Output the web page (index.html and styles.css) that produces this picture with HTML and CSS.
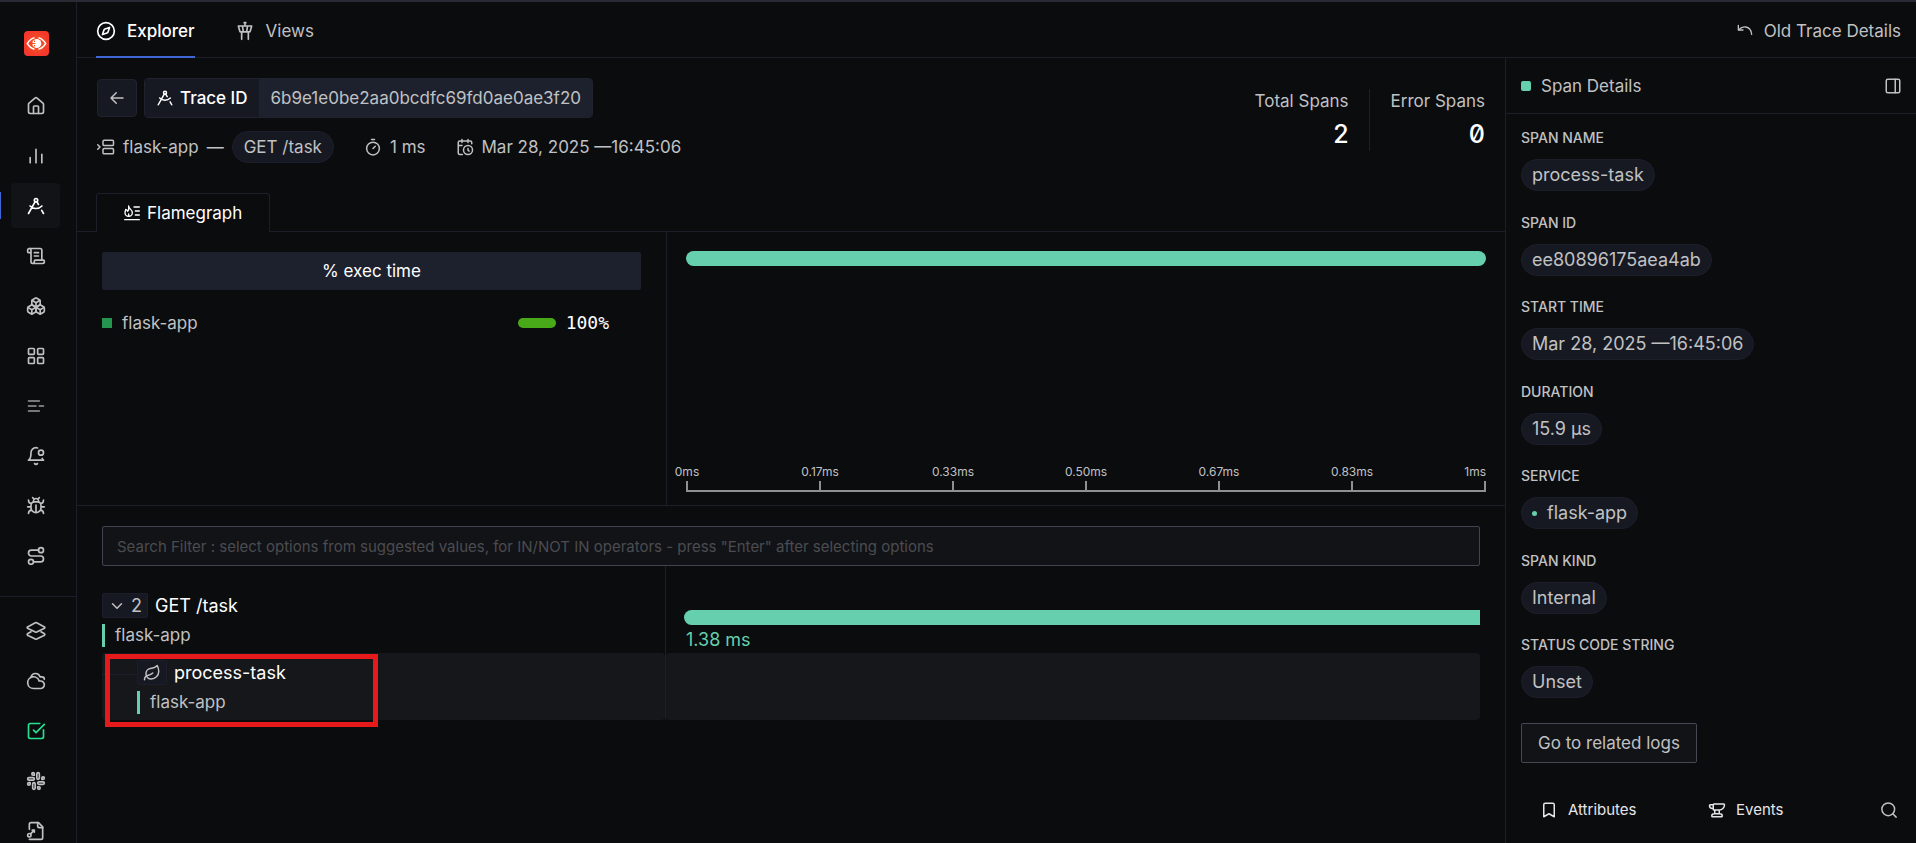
FILE: index.html
```html
<!DOCTYPE html>
<html lang="en">
<head>
<meta charset="utf-8">
<title>Trace Details</title>
<link rel="stylesheet" href="styles.css">
</head>
<body>
<div class="app">
  <nav class="sidebar" aria-label="Primary">
    <a class="logo" href="#" aria-label="Home">
      <svg viewBox="0 0 25 25" width="25" height="25"><defs><radialGradient id="lg"><stop offset="0" stop-color="#f25a1c"/><stop offset="1" stop-color="#f5382c"/></radialGradient></defs><rect width="25" height="25" rx="4" fill="url(#lg)"/><path d="M10.500 6.800Q6.500 7.500 3.300 12.500Q6.500 17.500 10.500 18.200M14.500 6.800Q18.500 7.500 21.700 12.500Q18.500 17.500 14.500 18.200" fill="none" stroke="#fff" stroke-width="1.400"/><circle cx="12.800" cy="12.500" r="4.500" fill="#fff"/><path d="M10.500 9.500v1.500M10.500 14v1.500M8 12.500h3.500" stroke="#f3521f" stroke-width="1"/></svg>
    </a>
    <ul class="nav-list">
      <li><a class="nav-item" href="#" aria-label="Home"><svg class="ico" viewBox="0 0 24 24"><path d="M15 21v-8a1 1 0 0 0-1-1h-4a1 1 0 0 0-1 1v8"/><path d="M3 10a2 2 0 0 1 .709-1.528l7-5.999a2 2 0 0 1 2.582 0l7 5.999A2 2 0 0 1 21 10v9a2 2 0 0 1-2 2H5a2 2 0 0 1-2-2z"/></svg></a></li>
      <li><a class="nav-item" href="#" aria-label="Services"><svg class="ico" viewBox="0 0 24 24"><path d="M12 20V4M19 20V10M5 20v-6"/></svg></a></li>
      <li><a class="nav-item active" href="#" aria-label="Traces"><svg class="ico" viewBox="0 0 24 24"><use href="#drafting"/></svg></a></li>
      <li><a class="nav-item" href="#" aria-label="Logs"><svg class="ico" viewBox="0 0 24 24"><path d="M15 12h-5M15 8h-5M19 17V5a2 2 0 0 0-2-2H4"/><path d="M8 21h12a2 2 0 0 0 2-2v-1a1 1 0 0 0-1-1H11a1 1 0 0 0-1 1v1a2 2 0 1 1-4 0V5a2 2 0 1 0-4 0v2a1 1 0 0 0 1 1h3"/></svg></a></li>
      <li><a class="nav-item" href="#" aria-label="Infrastructure"><svg class="ico" viewBox="0 0 24 24"><path d="M2.970 12.920A2 2 0 0 0 2 14.630v3.240a2 2 0 0 0 .970 1.710l3 1.800a2 2 0 0 0 2.060 0L12 19v-5.500l-5-3-4.030 2.420Z"/><path d="m7 16.500-4.740-2.850M7 16.500l5-3M7 16.500v5.170"/><path d="M12 13.500V19l3.970 2.380a2 2 0 0 0 2.060 0l3-1.800a2 2 0 0 0 .970-1.710v-3.240a2 2 0 0 0-.970-1.710L17 10.500l-5 3Z"/><path d="m17 16.500-5-3M17 16.500l4.740-2.850M17 16.500v5.170"/><path d="M7.970 4.420A2 2 0 0 0 7 6.130v4.370l5 3 5-3V6.130a2 2 0 0 0-.970-1.710l-3-1.800a2 2 0 0 0-2.060 0l-3 1.800Z"/><path d="M12 8 7.260 5.150M12 8l4.740-2.850M12 13.500V8"/></svg></a></li>
      <li><a class="nav-item" href="#" aria-label="Dashboards"><svg class="ico" viewBox="0 0 24 24"><rect x="3" y="3" width="7" height="7" rx="1"/><rect x="14" y="3" width="7" height="7" rx="1"/><rect x="14" y="14" width="7" height="7" rx="1"/><rect x="3" y="14" width="7" height="7" rx="1"/></svg></a></li>
      <li><a class="nav-item" href="#" aria-label="Messaging queues"><svg class="ico dim" viewBox="0 0 24 24"><path d="M3 6h13M3 12h9M16 12h5M3 18h13"/></svg></a></li>
      <li><a class="nav-item" href="#" aria-label="Alerts"><svg class="ico" viewBox="0 0 24 24"><path d="M19.400 14.900C20.200 16.400 21 17 21 17H3s3-2 3-9c0-3.300 2.700-6 6-6 .700 0 1.300.100 1.900.300"/><path d="M10.300 21a1.940 1.940 0 0 0 3.400 0"/><circle cx="18" cy="8" r="3"/></svg></a></li>
      <li><a class="nav-item" href="#" aria-label="Exceptions"><svg class="ico" viewBox="0 0 24 24"><path d="m8 2 1.880 1.880M14.120 3.880 16 2M9 7.130v-1a3.003 3.003 0 1 1 6 0v1"/><path d="M12 20c-3.300 0-6-2.700-6-6v-3a4 4 0 0 1 4-4h4a4 4 0 0 1 4 4v3c0 3.300-2.700 6-6 6M12 20v-9M6.530 9C4.600 8.800 3 7.100 3 5M6 13H2M3 21c0-2.100 1.700-3.900 3.800-4M20.970 5c0 2.100-1.600 3.800-3.500 4M22 13h-4M17.200 17c2.100.100 3.800 1.900 3.800 4"/></svg></a></li>
      <li><a class="nav-item" href="#" aria-label="Service map"><svg class="ico" viewBox="0 0 24 24"><circle cx="6" cy="19" r="3"/><path d="M9 19h8.500a3.500 3.500 0 0 0 0-7h-11a3.500 3.500 0 0 1 0-7H15"/><circle cx="18" cy="5" r="3"/></svg></a></li>
    </ul>
    <ul class="nav-list nav-secondary">
      <li><a class="nav-item" href="#" aria-label="Workspace"><svg class="ico" viewBox="0 0 24 24"><path d="M12.830 2.180a2 2 0 0 0-1.660 0L1.800 7.080a1 1 0 0 0 0 1.630l9.380 4.610a2 2 0 0 0 1.660 0l9.380-4.600a1 1 0 0 0 0-1.630ZM6 13 1.800 15.380a1 1 0 0 0 0 1.630l9.380 4.710a2 2 0 0 0 1.660 0l9.380-4.700a1 1 0 0 0 0-1.630L18 13"/></svg></a></li>
      <li><a class="nav-item" href="#" aria-label="Cloud"><svg class="ico" viewBox="0 0 24 24"><path d="M17.500 21H9a7 7 0 1 1 6.710-9h1.790a4.500 4.500 0 1 1 0 9Z"/><path d="M22 10a3 3 0 0 0-3-3h-2.207a5.502 5.502 0 0 0-10.702.500"/></svg></a></li>
      <li><a class="nav-item ok" href="#" aria-label="Status"><svg class="ico" viewBox="0 0 24 24"><path d="M21 10.500V19a2 2 0 0 1-2 2H5a2 2 0 0 1-2-2V5a2 2 0 0 1 2-2h11.500"/><path d="m9 11 3 3L22 4"/></svg></a></li>
      <li><a class="nav-item" href="#" aria-label="Slack"><svg class="ico" viewBox="0 0 24 24"><rect x="13" y="2" width="3" height="8" rx="1.500"/><path d="M19 8.500V10h1.500A1.500 1.500 0 1 0 19 8.500"/><rect x="8" y="14" width="3" height="8" rx="1.500"/><path d="M5 15.500V14H3.500A1.500 1.500 0 1 0 5 15.500"/><rect x="14" y="13" width="8" height="3" rx="1.500"/><path d="M15.500 19H14v1.500a1.500 1.500 0 1 0 1.500-1.500"/><rect x="2" y="8" width="8" height="3" rx="1.500"/><path d="M8.500 5H10V3.500A1.500 1.500 0 1 0 8.500 5"/></svg></a></li>
      <li><a class="nav-item" href="#" aria-label="Shortcuts"><svg class="ico" viewBox="0 0 24 24"><path d="M14 2v4a2 2 0 0 0 2 2h4"/><path d="M4 10V4a2 2 0 0 1 2-2h9l5 5v13a2 2 0 0 1-2 2H4"/><circle cx="4" cy="17" r="2"/><path d="m5.500 15.500 4.500-4.500M7.500 11H10v2.500"/></svg></a></li>
    </ul>
  </nav>

  <div class="page">
    <header class="topbar">
      <div class="top-tabs">
        <a class="top-tab active" href="#"><svg class="ico" viewBox="0 0 24 24"><circle cx="12" cy="12" r="10"/><path d="m16.240 7.760-1.804 5.411a2 2 0 0 1-1.265 1.265L7.760 16.240l1.804-5.411a2 2 0 0 1 1.265-1.265z"/></svg><span>Explorer</span></a>
        <a class="top-tab" href="#"><svg class="ico" viewBox="0 0 24 24"><path d="M18.200 12.270 20 6H4l1.800 6.270a1 1 0 0 0 .950.730h10.500a1 1 0 0 0 .960-.730ZM8 13v9M16 22v-9M9 6l1 7M15 6l-1 7M12 6V2M13 2h-2"/></svg><span>Views</span></a>
      </div>
      <a class="old-link" href="#"><svg class="ico s16" viewBox="0 0 24 24"><path d="M2 3.500v7h7"/><path d="M2.500 10C6 6.500 9.500 5.500 13 6c5 .800 8.500 5 9 11"/></svg><span>Old Trace Details</span></a>
    </header>

    <div class="body">
      <main class="main">
        <section class="trace-head">
          <div class="trace-info">
            <div class="id-row">
              <button class="back" type="button" aria-label="Back"><svg class="ico s18" viewBox="0 0 24 24"><path d="m11 19-7-7 7-7M20 12H4"/></svg></button>
              <div class="trace-id">
                <div class="id-label"><svg class="ico s18" viewBox="0 0 24 24"><use href="#drafting"/></svg><span>Trace ID</span></div>
                <div class="id-value">6b9e1e0be2aa0bcdfc69fd0ae0ae3f20</div>
              </div>
            </div>
            <div class="meta-row">
              <div class="meta svc"><svg class="ico s18" viewBox="0 0 24 24"><rect x="8" y="3" width="14" height="7" rx="1.500"/><rect x="8" y="14" width="14" height="7" rx="1.500"/><path d="m1 9 3 3-3 3"/></svg><span>flask-app</span><span>—</span><span class="chip">GET /task</span></div>
              <div class="meta"><svg class="ico s18" viewBox="0 0 24 24"><path d="M10 2h4M12 14l3-3"/><circle cx="12" cy="14" r="8.500"/></svg><span>1 ms</span></div>
              <div class="meta"><svg class="ico s18" viewBox="0 0 24 24"><path d="M21 7.500V6a2 2 0 0 0-2-2H5a2 2 0 0 0-2 2v14a2 2 0 0 0 2 2h3.500M16 2v4M8 2v4M3 10h5M17.500 17.500 16 16.300V14"/><circle cx="16" cy="16" r="6"/></svg><span>Mar 28, 2025 —16:45:06</span></div>
            </div>
          </div>
          <dl class="stats">
            <div class="stat"><dt>Total Spans</dt><dd>2</dd></div>
            <div class="stat"><dt>Error Spans</dt><dd>0</dd></div>
          </dl>
        </section>

        <div class="tabs">
          <button class="tab" type="button"><svg class="ico s16 fine" viewBox="0 0 24 24"><path d="M15 3h8M17 9h6M17 15h6M1 22h22M7 1.500c0 4.500 5.500 5 5.500 10a5.500 5.500 0 0 1-11 0c0-2 1-3 1-5C4 7 5 8 5.500 9.500 7 8 7.500 5 7 1.500ZM7 16.500v-3"/></svg><span>Flamegraph</span></button>
        </div>

        <section class="flame">
          <div class="exec">
            <div class="exec-title">% exec time</div>
            <div class="exec-row">
              <span class="sq"></span><span class="exec-name">flask-app</span>
              <span class="exec-bar"></span><span class="exec-pct">100%</span>
            </div>
          </div>
          <div class="flame-chart">
            <div class="bar"></div>
            <div class="axis">
              <span>0ms</span><span>0.17ms</span><span>0.33ms</span><span>0.50ms</span><span>0.67ms</span><span>0.83ms</span><span>1ms</span>
            </div>
          </div>
        </section>

        <section class="spans">
          <input class="search" type="text" aria-label="Search filter" placeholder='Search Filter : select options from suggested values, for IN/NOT IN operators - press "Enter" after selecting options'>
          <div class="waterfall">
            <div class="span-row">
              <div class="span-left">
                <div class="span-top"><button class="count" type="button"><svg class="ico s18" viewBox="0 0 24 24"><path d="m6 9 6 6 6-6"/></svg><span>2</span></button><span class="span-name">GET /task</span></div>
                <div class="span-svc">flask-app</div>
              </div>
              <div class="span-right"><div class="bar open"></div><div class="dur">1.38 ms</div></div>
            </div>
            <div class="span-row selected">
              <div class="span-left child">
                <div class="span-top"><span class="leaf"><svg class="ico s18" viewBox="0 0 24 24"><path d="M11 20A7 7 0 0 1 9.800 6.100C15.500 5 17 4.480 19 2c1 2 2 4.180 2 8 0 5.500-4.780 10-10 10Z"/><path d="M2 21c0-3 1.850-5.360 5.080-6C9.500 14.520 12 13 13 12"/></svg></span><span class="span-name">process-task</span></div>
                <div class="span-svc">flask-app</div>
              </div>
              <div class="span-right"></div>
              <div class="highlight"></div>
            </div>
          </div>
        </section>
      </main>

      <aside class="details">
        <div class="details-head"><span class="dot-sq"></span><h2>Span Details</h2><button class="plain" type="button" aria-label="Dock panel"><svg class="ico s18" viewBox="0 0 24 24"><rect x="3" y="3" width="18" height="18" rx="2"/><path d="M15 3v18"/></svg></button></div>
        <dl class="attrs">
          <div><dt>SPAN NAME</dt><dd class="chip">process-task</dd></div>
          <div><dt>SPAN ID</dt><dd class="chip">ee80896175aea4ab</dd></div>
          <div><dt>START TIME</dt><dd class="chip">Mar 28, 2025 —16:45:06</dd></div>
          <div><dt>DURATION</dt><dd class="chip">15.9 µs</dd></div>
          <div><dt>SERVICE</dt><dd class="chip"><span class="dot"></span>flask-app</dd></div>
          <div><dt>SPAN KIND</dt><dd class="chip">Internal</dd></div>
          <div><dt>STATUS CODE STRING</dt><dd class="chip">Unset</dd></div>
        </dl>
        <button class="related" type="button">Go to related logs</button>
        <div class="detail-tabs">
          <button class="dtab" type="button"><svg class="ico s18" viewBox="0 0 24 24"><path d="m19 21-7-4-7 4V5a2 2 0 0 1 2-2h10a2 2 0 0 1 2 2z"/></svg><span>Attributes</span></button>
          <button class="dtab" type="button"><svg class="ico s18" viewBox="0 0 24 24"><path d="M7 10H6a4 4 0 0 1-4-4 1 1 0 0 1 1-1h4M7 5a1 1 0 0 1 1-1h13a1 1 0 0 1 1 1 7 7 0 0 1-7 7H8a1 1 0 0 1-1-1zM9 12v5M15 12v5M5 20a3 3 0 0 1 3-3h8a3 3 0 0 1 3 3 1 1 0 0 1-1 1H6a1 1 0 0 1-1-1"/></svg><span>Events</span></button>
          <button class="plain" type="button" aria-label="Search attributes"><svg class="ico s18" viewBox="0 0 24 24"><circle cx="11" cy="11" r="8.500"/><path d="m21.500 21.500-4.400-4.400"/></svg></button>
        </div>
      </aside>
    </div>
  </div>
</div>
<svg class="defs" aria-hidden="true"><defs><g id="drafting"><path d="m12.990 6.740 1.930 3.440M19.136 12a10 10 0 0 1-14.271 0M21 21l-2.160-3.840M3 21l8.020-14.260"/><circle cx="12" cy="5" r="2"/></g></defs></svg>
</body>
</html>
```

FILE: styles.css
```css
* { box-sizing: border-box; }
:root {
  --bg: #0b0c0e;
  --line: #1d1e2b;
  --panel: #171922;
  --slate: #1d212d;
  --text: #c0c1c3;
  --mint: #66cfad;
}
body {
  margin: 0;
  background: var(--bg);
  color: var(--text);
  font: 17px/24px Inter, "Liberation Sans", sans-serif;
}
button, input { font: inherit; color: inherit; }
button { cursor: pointer; }
a { color: inherit; text-decoration: none; }
ul, dl, dd, h2 { margin: 0; padding: 0; list-style: none; }
.defs { position: absolute; width: 0; height: 0; }
.ico {
  width: 20px; height: 20px; flex: none;
  fill: none; stroke: currentColor; stroke-width: 2;
  stroke-linecap: round; stroke-linejoin: round;
}
.s18 { width: 18px; height: 18px; }
.s16 { width: 16px; height: 16px; }
.dim { opacity: .8; }

.app { display: flex; height: 100vh; border-top: 2px solid #2a2a35; overflow: hidden; }

.sidebar { width: 77px; flex: none; border-right: 1px solid var(--line); overflow: hidden; }
.logo { display: block; height: 25px; margin: 29px 0 27px 24px; }
.nav-list { display: grid; gap: 5px; }
.nav-secondary { margin-top: 18px; padding-top: 11px; border-top: 1px solid var(--line); }
.nav-item { display: grid; place-items: center; width: 49px; height: 45px; margin-left: 11px; border-radius: 4px; }
.nav-list li:has(.active) { background: linear-gradient(#3f66d8, #3f66d8) left center / 1px 27px no-repeat; }
.nav-item.active { background: #121317; color: #fff; }
.nav-item.ok { color: #25e192; }

.page { flex: 1; min-width: 0; display: flex; flex-direction: column; }
.topbar { display: flex; justify-content: space-between; height: 56px; flex: none; padding: 0 15px 0 19px; border-bottom: 1px solid var(--line); }
.top-tabs { display: flex; gap: 40px; }
.top-tab { display: flex; align-items: center; gap: 11px; height: 56px; padding-top: 4px; border-bottom: 2px solid transparent; }
.top-tab.active { color: #fff; font-weight: 500; border-color: #4166d6; }
.old-link { display: flex; align-items: center; gap: 11px; padding-top: 3px; }

.body { flex: 1; min-height: 0; display: flex; }
.main { flex: 1; min-width: 0; border-right: 1px solid var(--line); }

.trace-head { display: flex; justify-content: space-between; padding: 20px 20px 0 20px; }
.id-row { display: flex; align-items: center; gap: 7px; }
.back { display: grid; place-items: center; width: 40px; height: 38px; padding: 0; background: var(--panel); border: 1px solid #20232f; border-radius: 4px; }
.trace-id { display: flex; height: 40px; border: 1px solid #20232f; border-radius: 4px; overflow: hidden; }
.id-label, .id-value { display: flex; align-items: center; gap: 6px; padding: 0 11px; }
.id-label { background: var(--panel); color: #fff; font-weight: 500; border-right: 1px solid #20232f; }
.id-value { background: var(--slate); }
.meta-row { display: flex; gap: 30px; margin-top: 13px; }
.meta { display: flex; align-items: center; gap: 8px; height: 32px; }
.chip {
  display: inline-flex; align-items: center; gap: 10px;
  height: 32px; padding: 0 11px;
  background: var(--panel); border: 1px solid var(--line); border-radius: 16px;
}
.stats { display: flex; margin-top: 11px; height: 62px; }
.stat { text-align: right; }
.stat + .stat { margin-left: 20px; padding-left: 21px; border-left: 1px solid var(--line); }
.stat dd { margin-top: 9px; color: #fff; font-size: 25px; font-weight: 500; font-feature-settings: "zero"; }

.tabs { display: flex; margin-top: 30px; padding-left: 19px; border-bottom: 1px solid var(--line); }
.tab {
  display: flex; align-items: center; gap: 7px;
  height: 39px; margin-bottom: -1px; padding: 0 27px;
  background: var(--bg); color: #fff;
  border: 1px solid var(--line); border-bottom: 0; border-radius: 3px 3px 0 0;
}

.flame { display: grid; grid-template-columns: 590px 1fr; height: 274px; border-bottom: 1px solid var(--line); }
.exec { padding: 20px 25px; border-right: 1px solid var(--line); }
.exec-title { height: 38px; line-height: 38px; text-align: center; background: var(--slate); color: #fff; border-radius: 2px; }
.exec-row { display: flex; align-items: center; margin-top: 21px; padding-right: 32px; }
.sq { width: 10px; height: 10px; margin-right: 10px; background: #25964f; }
.exec-name { flex: 1; }
.exec-bar { width: 38px; height: 10px; margin-right: 10px; border-radius: 5px; background: #49aa19; }
.exec-pct { color: #fff; font: 18px/24px "DejaVu Sans Mono", monospace; }
.flame-chart { display: flex; flex-direction: column; justify-content: space-between; padding: 19px 19px 13px; }
.bar { height: 15px; border-radius: 8px; background: var(--mint); }
.axis { display: flex; justify-content: space-between; height: 28px; border-bottom: 2px solid #8f9092; font-size: 12px; line-height: 16px; }
.axis span { display: flex; justify-content: center; width: 2px; white-space: nowrap; background: linear-gradient(#8f9092, #8f9092) bottom / 2px 9px no-repeat; }
.axis span:last-child { justify-content: flex-end; }

.spans { padding: 20px 25px; }
.search {
  display: block; width: 100%; height: 40px; padding: 0 14px;
  background: #121317; border: 1px solid #3f4450; border-radius: 2px;
  font-size: 15px;
}
.search::placeholder { color: #4b4c50; opacity: 1; }
.span-row { position: relative; display: grid; grid-template-columns: 564px 1fr; height: 67px; }
.waterfall { padding-top: 20px; background: linear-gradient(var(--line), var(--line)) 563px 0 / 1px 100% no-repeat; }
.span-left { padding-top: 7px; border-radius: 4px; margin-right: 1px; }
.span-top { display: flex; align-items: center; gap: 7px; color: #fff; font-size: 18px; }
.count, .leaf { display: flex; align-items: center; gap: 5px; height: 25px; padding: 0 5px; background: var(--panel); border: 1px solid var(--line); border-radius: 2px; color: var(--text); }
.span-svc { margin-top: 6px; padding-left: 10px; border-left: 3px solid var(--mint); line-height: 23px; }
.child { padding-left: 35px; }
.selected .span-left { background: linear-gradient(var(--line), var(--line)) 0 21px / 35px 1px no-repeat, #16171b; }
.selected .span-right { background: #16171b; border-radius: 4px; }
.span-right .bar { margin: 24px 0 0 18px; }
.bar.open { border-radius: 8px 0 0 8px; }
.dur { margin: 3px 0 0 20px; color: var(--mint); font-size: 18px; }
.highlight { position: absolute; left: 3px; top: 1px; width: 273px; height: 73px; border: 5px solid #e61a1a; }

.details { width: 410px; flex: none; display: flex; flex-direction: column; }
.details-head { display: flex; align-items: center; gap: 10px; height: 56px; padding: 0 14px 0 15px; border-bottom: 1px solid var(--line); }
.details-head h2 { flex: 1; font-size: 17px; font-weight: 400; }
.dot-sq { width: 10px; height: 10px; border-radius: 2px; background: var(--mint); }
.plain { padding: 0; background: none; border: 0; display: grid; }
.attrs { flex: 1; display: flex; flex-direction: column; justify-content: space-between; padding: 14px 15px 0; }
.attrs dt { margin-bottom: 11px; font-size: 14px; line-height: 20px; font-weight: 500; }
.attrs .chip { padding: 0 10px; font-size: 18px; }
.dot { width: 5px; height: 5px; border-radius: 50%; background: var(--mint); }
.related { align-self: flex-start; height: 40px; margin: 25px 0 0 15px; padding: 0 16px; background: #121317; border: 1px solid #454852; border-radius: 2px; }
.detail-tabs { display: flex; align-items: center; height: 80px; padding: 14px 18px 0 34px; }
.dtab { display: flex; align-items: center; gap: 10px; width: 168px; padding: 0; background: none; border: 0; font-size: 15px; color: #e6e6e8; }
.detail-tabs .plain { margin-left: auto; }
```
